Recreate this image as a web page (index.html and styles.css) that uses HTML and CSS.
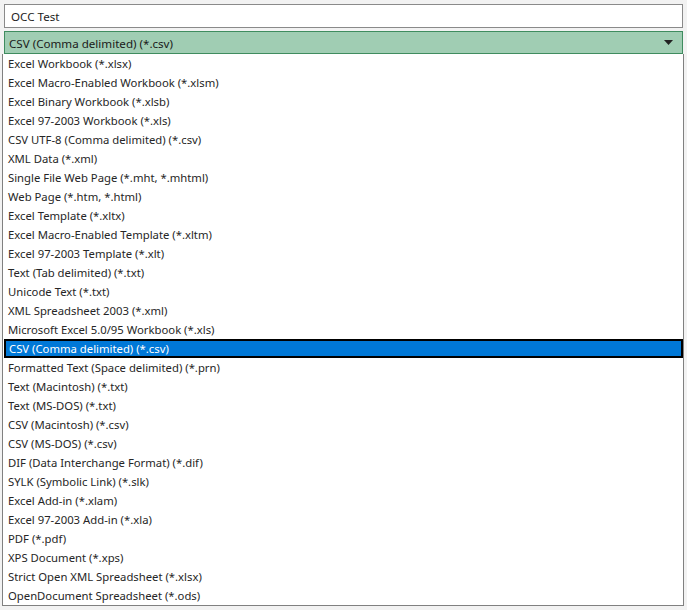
FILE: index.html
```html
<!DOCTYPE html>
<html lang="en">
<head>
  <meta charset="UTF-8">
  <title>Save As Type</title>
  <link rel="stylesheet" href="styles.css">
</head>
<body>
  <div class="panel">
    <div class="filename">OCC Test</div>

    <div class="combo">
      <span>CSV (Comma delimited) (*.csv)</span>
      <svg class="arrow" width="9" height="5" viewBox="0 0 9 5"><path d="M0 0H9L4.5 5Z" fill="#222"/></svg>
    </div>

    <ul class="types">
      <li>Excel Workbook (*.xlsx)</li>
      <li>Excel Macro-Enabled Workbook (*.xlsm)</li>
      <li>Excel Binary Workbook (*.xlsb)</li>
      <li>Excel 97-2003 Workbook (*.xls)</li>
      <li>CSV UTF-8 (Comma delimited) (*.csv)</li>
      <li>XML Data (*.xml)</li>
      <li>Single File Web Page (*.mht, *.mhtml)</li>
      <li>Web Page (*.htm, *.html)</li>
      <li>Excel Template (*.xltx)</li>
      <li>Excel Macro-Enabled Template (*.xltm)</li>
      <li>Excel 97-2003 Template (*.xlt)</li>
      <li>Text (Tab delimited) (*.txt)</li>
      <li>Unicode Text (*.txt)</li>
      <li>XML Spreadsheet 2003 (*.xml)</li>
      <li>Microsoft Excel 5.0/95 Workbook (*.xls)</li>
      <li class="selected">CSV (Comma delimited) (*.csv)</li>
      <li>Formatted Text (Space delimited) (*.prn)</li>
      <li>Text (Macintosh) (*.txt)</li>
      <li>Text (MS-DOS) (*.txt)</li>
      <li>CSV (Macintosh) (*.csv)</li>
      <li>CSV (MS-DOS) (*.csv)</li>
      <li>DIF (Data Interchange Format) (*.dif)</li>
      <li>SYLK (Symbolic Link) (*.slk)</li>
      <li>Excel Add-in (*.xlam)</li>
      <li>Excel 97-2003 Add-in (*.xla)</li>
      <li>PDF (*.pdf)</li>
      <li>XPS Document (*.xps)</li>
      <li>Strict Open XML Spreadsheet (*.xlsx)</li>
      <li>OpenDocument Spreadsheet (*.ods)</li>
    </ul>
  </div>
</body>
</html>
```

FILE: styles.css
```css
body {
  margin: 0;
  padding: 0;
  background: #f2f2f2;
  font-family: "Noto Sans", "Open Sans", sans-serif;
  font-size: 11.3px;
  color: #262626;
}

.panel {
  width: 680px;
  padding: 4px 0 0 3px;
}

.filename {
  margin-left: 1px;
  height: 22px;
  line-height: 23px;
  padding-left: 6px;
  background: #fff;
  border: 1px solid #8a8a8a;
  font-size: 11.6px;
  color: #222;
}

.combo {
  margin: 3px 0 0 1px;
  height: 20px;
  display: flex;
  align-items: center;
  justify-content: space-between;
  padding: 1px 9px 0 4px;
  background: #a0cdb3;
  border: 1px solid #3f8c5f;
  color: #1a1a1a;
  font-size: 11.6px;
}

.arrow {
  margin-top: -1px;
}

.types {
  list-style: none;
  margin: 0;
  padding: 0;
  background: #fff;
  border: 1px solid #808080;
  border-top: none;
  margin-left: -1px;
  width: 680px;
}

.types li {
  height: 19px;
  line-height: 20px;
  padding-left: 5px;
  white-space: nowrap;
}

.types li.selected {
  background: #0078d7;
  color: #fff;
  border: 2px solid #000;
  height: 15px;
  line-height: 16px;
  padding-left: 3px;
  margin-left: 1px;
}
```
